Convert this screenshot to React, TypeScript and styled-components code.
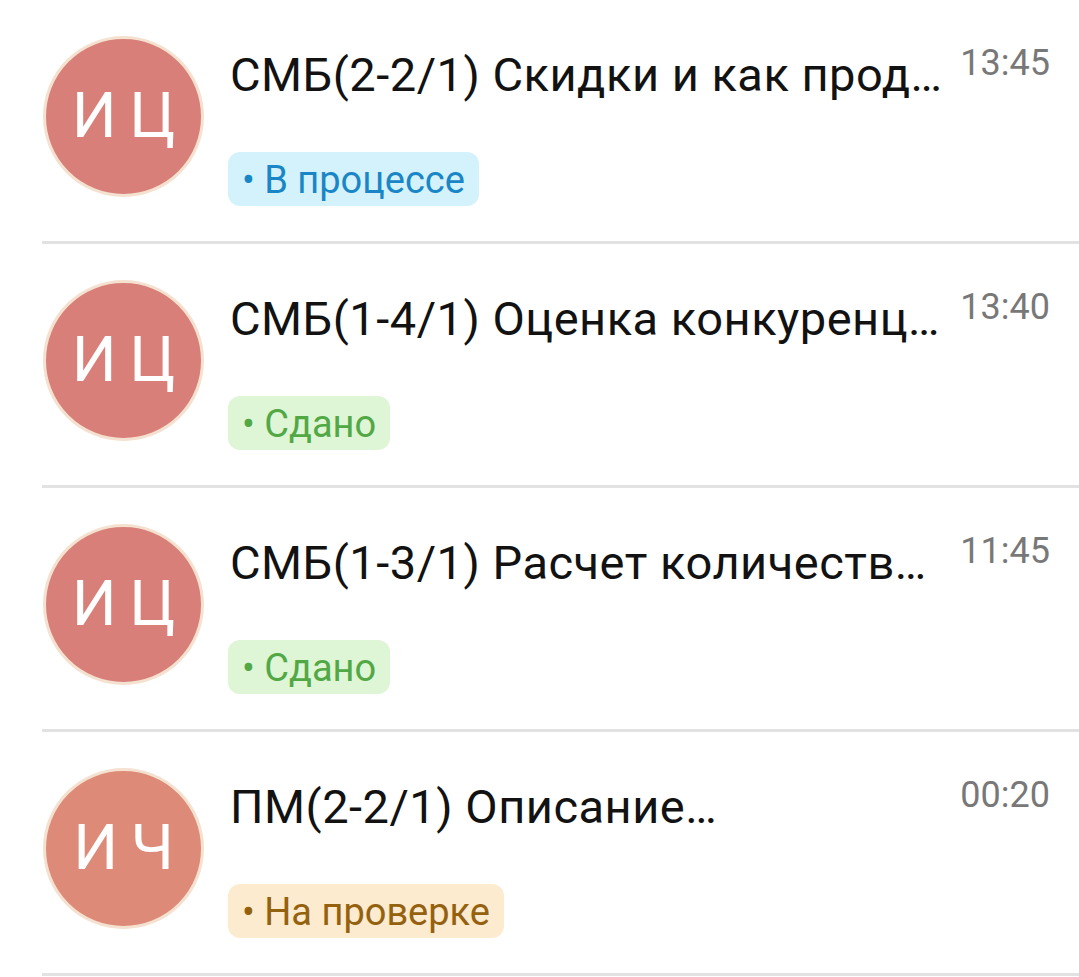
import React from "react";
import styled, { createGlobalStyle } from "styled-components";

const Global = createGlobalStyle`
  html, body { margin: 0; padding: 0; background: #ffffff; }
  body { font-family: Roboto, "Noto Sans", Arial, sans-serif; -webkit-font-smoothing: antialiased; }
  * { box-sizing: border-box; }
`;

type Tone = "blue" | "green" | "orange";

const tones: Record<Tone, { bg: string; fg: string }> = {
  blue: { bg: "#d4f2fc", fg: "#1a86c6" },
  green: { bg: "#def5d6", fg: "#52a845" },
  orange: { bg: "#fdebd0", fg: "#94610f" },
};

const List = styled.div`
  padding-left: 42px;
  width: 1079px;
`;

const Row = styled.div`
  display: flex;
  align-items: flex-start;
  height: 244px;
  border-bottom: 3px solid #e2e2e2;
  padding: 36px 29px 0 1px;
`;

const Avatar = styled.div<{ $bg: string }>`
  flex: none;
  width: 161px;
  height: 161px;
  border-radius: 50%;
  background: ${(p) => p.$bg};
  border: 3px solid #f4e1cf;
  display: flex;
  align-items: center;
  justify-content: center;
  color: #ffffff;
  font-family: Roboto, sans-serif;
  font-size: 63px;
  word-spacing: -3px;
  padding-bottom: 2px;
`;

const Body = styled.div`
  flex: 1;
  min-width: 0;
  margin-left: 26px;
  display: flex;
  flex-direction: column;
  align-items: flex-start;
`;

const Head = styled.div`
  display: flex;
  align-items: flex-start;
  justify-content: space-between;
  width: 100%;
  margin-top: 12px;
`;

const Title = styled.div`
  min-width: 0;
  font-size: 47px;
  line-height: 54px;
  letter-spacing: 0.5px;
  color: #121212;
  white-space: nowrap;
  overflow: hidden;
  text-overflow: ellipsis;
  margin-right: 14px;
`;

const Time = styled.div`
  flex: none;
  font-size: 36px;
  line-height: 40px;
  color: #787878;
  margin-top: -5px;
`;

const Badge = styled.div<{ $tone: Tone }>`
  margin-top: 50px;
  margin-left: -2px;
  height: 54px;
  padding: 0 14px 0 14px;
  border-radius: 12px;
  background: ${(p) => tones[p.$tone].bg};
  color: ${(p) => tones[p.$tone].fg};
  font-size: 38px;
  line-height: 56px;
  white-space: nowrap;
`;

const items: { initials: string; color: string; title: string; time: string; status: string; tone: Tone }[] = [
  { initials: "И Ц", color: "#d87f79", title: "СМБ(2-2/1) Скидки и как прод…", time: "13:45", status: "• В процессе", tone: "blue" },
  { initials: "И Ц", color: "#d87f79", title: "СМБ(1-4/1) Оценка конкуренц…", time: "13:40", status: "• Сдано", tone: "green" },
  { initials: "И Ц", color: "#d87f79", title: "СМБ(1-3/1) Расчет количеств…", time: "11:45", status: "• Сдано", tone: "green" },
  { initials: "И Ч", color: "#dd8a78", title: "ПМ(2-2/1) Описание…", time: "00:20", status: "• На проверке", tone: "orange" },
];

export default function App() {
  return (
    <>
      <Global />
      <List>
        {items.map((it, i) => (
          <Row key={i}>
            <Avatar $bg={it.color}>{it.initials}</Avatar>
            <Body>
              <Head>
                <Title>{it.title}</Title>
                <Time>{it.time}</Time>
              </Head>
              <Badge $tone={it.tone}>{it.status}</Badge>
            </Body>
          </Row>
        ))}
      </List>
    </>
  );
}
